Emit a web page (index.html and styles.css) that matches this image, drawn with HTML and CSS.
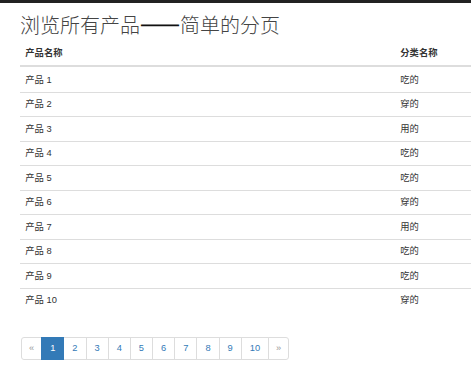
FILE: index.html
```html
<!DOCTYPE html>
<html lang="zh-CN">
<head>
<meta charset="utf-8">
<title>浏览所有产品——简单的分页</title>
<link rel="stylesheet" href="styles.css">
</head>
<body>
<div class="topbar"></div>
<div class="page">
  <h1 class="title">浏览所有产品<span class="dash">——</span>简单的分页</h1>
  <div class="table">
    <div class="row head"><div class="cell">产品名称</div><div class="cell">分类名称</div></div>
    <div class="row first"><div class="cell">产品 1</div><div class="cell">吃的</div></div>
    <div class="row"><div class="cell">产品 2</div><div class="cell">穿的</div></div>
    <div class="row"><div class="cell">产品 3</div><div class="cell">用的</div></div>
    <div class="row"><div class="cell">产品 4</div><div class="cell">吃的</div></div>
    <div class="row"><div class="cell">产品 5</div><div class="cell">吃的</div></div>
    <div class="row"><div class="cell">产品 6</div><div class="cell">穿的</div></div>
    <div class="row"><div class="cell">产品 7</div><div class="cell">用的</div></div>
    <div class="row"><div class="cell">产品 8</div><div class="cell">吃的</div></div>
    <div class="row"><div class="cell">产品 9</div><div class="cell">吃的</div></div>
    <div class="row"><div class="cell">产品 10</div><div class="cell">穿的</div></div>
  </div>
  <ul class="pagination">
    <li class="pg-item edge-left muted"><a>&laquo;</a></li>
    <li class="pg-item active"><a>1</a></li>
    <li class="pg-item"><a>2</a></li>
    <li class="pg-item"><a>3</a></li>
    <li class="pg-item"><a>4</a></li>
    <li class="pg-item"><a>5</a></li>
    <li class="pg-item"><a>6</a></li>
    <li class="pg-item"><a>7</a></li>
    <li class="pg-item"><a>8</a></li>
    <li class="pg-item"><a>9</a></li>
    <li class="pg-item"><a>10</a></li>
    <li class="pg-item edge-right muted"><a>&raquo;</a></li>
  </ul>
</div>
</body>
</html>
```

FILE: styles.css
```css
html, body {
  margin: 0;
  padding: 0;
  background: #fff;
}
body {
  font-family: "Liberation Sans", "Noto Sans CJK SC", sans-serif;
  font-size: 9.3px;
  line-height: 13.2px;
  color: #333;
}
.topbar {
  height: 3px;
  background: #222;
}
.page {
  padding: 0 0 0 20px;
}
.title {
  margin: 10.5px 0 6.5px;
  font-family: "Noto Sans CJK SC", "Liberation Sans", sans-serif;
  font-size: 20px;
  line-height: 22px;
  font-weight: 300;
  color: #444;
}
.dash {
  color: #111;
  -webkit-text-stroke: 0.9px #111;
}
.table {
  display: flex;
  flex-direction: column;
}
.row {
  display: grid;
  grid-template-columns: 375px 1fr;
  border-top: 1px solid #ddd;
}
.row.head {
  border-top: none;
  border-bottom: 2px solid #ddd;
  font-weight: bold;
}
.row.first {
  border-top-color: transparent;
}
.cell {
  padding: 5.15px 5.3px;
}
.pagination {
  display: flex;
  list-style: none;
  margin: 24.5px 0 0 1px;
  padding: 0;
}
.pg-item a {
  display: block;
  padding: 4px 8px;
  line-height: 13px;
  border: 1px solid #ddd;
  margin-left: -1px;
  color: #337ab7;
  background: #fff;
}
.pg-item.muted a {
  color: #999;
  padding: 4px 7px;
}
.pg-item.edge-left a {
  margin-left: 0;
  border-radius: 3px 0 0 3px;
}
.pg-item.edge-right a {
  border-radius: 0 3px 3px 0;
}
.pg-item.active a {
  background: #337ab7;
  border-color: #337ab7;
  color: #fff;
  position: relative;
}
```
